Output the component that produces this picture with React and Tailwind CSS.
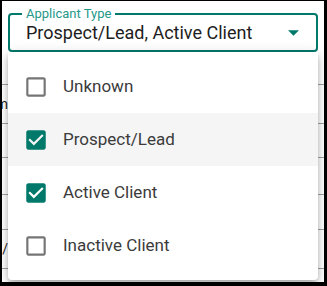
import React, { useState } from 'react';

const options = ['Unknown', 'Prospect/Lead', 'Active Client', 'Inactive Client'];

const CheckIcon = ({ checked }) =>
  checked ? (
    <svg viewBox="0 0 24 24" className="w-[26px] h-[26px] fill-[#00796b]">
      <path d="M19 3H5c-1.11 0-2 .9-2 2v14c0 1.1.89 2 2 2h14c1.11 0 2-.9 2-2V5c0-1.1-.89-2-2-2zm-9 14l-5-5 1.41-1.41L10 14.17l7.59-7.59L19 8l-9 9z" />
    </svg>
  ) : (
    <svg viewBox="0 0 24 24" className="w-[26px] h-[26px] fill-[#757575]">
      <path d="M19 5v14H5V5h14m0-2H5c-1.1 0-2 .9-2 2v14c0 1.1.9 2 2 2h14c1.1 0 2-.9 2-2V5c0-1.1-.9-2-2-2z" />
    </svg>
  );

const App = () => {
  const [selected, setSelected] = useState(['Prospect/Lead', 'Active Client']);
  const hovered = 'Prospect/Lead';

  const toggle = (opt) =>
    setSelected((s) => (s.includes(opt) ? s.filter((x) => x !== opt) : [...s, opt]));

  const value = options.filter((o) => selected.includes(o)).join(', ');

  return (
    <div className="w-[327px] h-[286px] bg-black pl-[2px] pt-[1px] pr-[3px] pb-[4px]">
      <div className="relative h-full bg-white overflow-hidden font-['Roboto','Liberation_Sans',sans-serif]">
        {/* select field */}
        <div className="pt-[12px] px-[6px]">
          <div className="relative h-[39px] rounded-[4px] border-2 border-[#00796b] flex items-center pl-[16px] pr-[16px]">
            <span className="absolute -top-[9px] left-[12px] px-[4px] bg-white text-[13px] leading-[16px] text-[#26978a]">
              Applicant Type
            </span>
            <span className="flex-1 text-[18px] leading-[22px] text-[#1d1d22] pt-[1px]">{value}</span>
            <svg viewBox="0 0 10 5" className="w-[11px] h-[6px] fill-[#00796b] mr-[1px]">
              <path d="M0 0l5 5 5-5z" />
            </svg>
          </div>
        </div>

        {/* page table behind */}
        <div className="mt-[1px]">
          <div className="h-[32px] border-b border-[#9e9e9e]" />
          <div className="h-[39px] border-b border-[#9e9e9e] flex items-center">
            <div className="w-[6px] overflow-hidden flex justify-end">
              <span className="whitespace-nowrap text-[14px] text-[#222]">Alm</span>
            </div>
          </div>
          <div className="h-[34px] border-b border-[#9e9e9e]" />
          <div className="h-[37px] border-b border-[#9e9e9e]" />
          <div className="h-[35px] border-b border-[#9e9e9e]" />
          <div className="h-[39px] border-b border-[#9e9e9e] flex items-center">
            <div className="w-[6px] overflow-hidden flex justify-end">
              <span className="whitespace-nowrap text-[14px] text-[#222]">N/</span>
            </div>
          </div>
        </div>

        {/* dropdown menu */}
        <ul className="absolute left-[6px] top-[51px] w-[310px] py-[8px] bg-white rounded-b-[4px] shadow-[0_3px_5px_-1px_rgba(0,0,0,0.2),0_5px_8px_0_rgba(0,0,0,0.14),0_1px_14px_0_rgba(0,0,0,0.12)]">
          {options.map((opt) => (
            <li
              key={opt}
              onClick={() => toggle(opt)}
              className={`h-[53px] flex items-center cursor-pointer ${opt === hovered ? 'bg-[#f5f5f5]' : ''}`}
            >
              <span className="ml-[15px] w-[26px] h-[26px] flex">
                <CheckIcon checked={selected.includes(opt)} />
              </span>
              <span className="ml-[14px] text-[17px] text-[#3b3b3b]">{opt}</span>
            </li>
          ))}
        </ul>
      </div>
    </div>
  );
};

export default App;
